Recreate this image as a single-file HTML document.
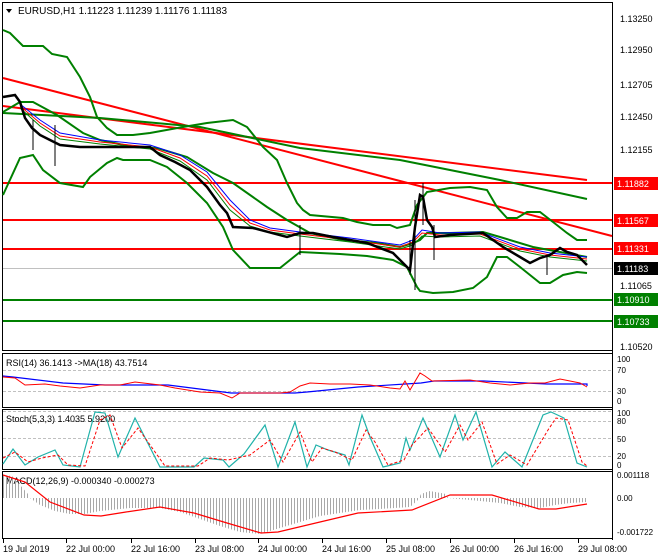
<!DOCTYPE html>
<html><head><style>
body{margin:0;background:#fff;}
svg{display:block;font-family:"Liberation Sans",sans-serif;}
</style></head><body>
<svg width="660" height="560" viewBox="0 0 660 560" xmlns="http://www.w3.org/2000/svg">
<defs>
<pattern id="hb" width="3" height="10" patternUnits="userSpaceOnUse"><rect x="0" y="0" width="1" height="10" fill="#a8a8a8"/></pattern>
</defs>
<rect width="660" height="560" fill="#fff"/>
<rect x="2.5" y="2.5" width="610" height="348" fill="none" stroke="#000"/>
<rect x="2.5" y="353.5" width="610" height="54" fill="none" stroke="#000"/>
<rect x="2.5" y="409.5" width="610" height="60" fill="none" stroke="#000"/>
<rect x="2.5" y="471.5" width="610" height="67" fill="none" stroke="#000"/>
<line x1="612.5" y1="2" x2="612.5" y2="540" stroke="#000"/>
<polygon points="6,9 12,9 9,13" fill="#000"/>
<text x="18" y="14" font-size="10">EURUSD,H1  1.11223 1.11239 1.11176 1.11183</text>
<line x1="3" y1="268.5" x2="612" y2="268.5" stroke="#c0c0c0"/>
<g stroke-width="2">
<line x1="3" y1="183" x2="612" y2="183" stroke="#f00"/>
<line x1="3" y1="220" x2="612" y2="220" stroke="#f00"/>
<line x1="3" y1="249" x2="612" y2="249" stroke="#f00"/>
<line x1="3" y1="300" x2="612" y2="300" stroke="#008000"/>
<line x1="3" y1="321" x2="612" y2="321" stroke="#008000"/>
</g>
<line x1="3" y1="78" x2="612" y2="236" stroke="#f00" stroke-width="2"/>
<line x1="3" y1="106" x2="587" y2="180" stroke="#f00" stroke-width="2"/>
<!-- long green MA -->
<polyline fill="none" stroke="#008000" stroke-width="2" points="3,113 100,118 200,127 300,148 400,160 450,170 500,180 587,199"/>
<!-- BB upper -->
<polyline fill="none" stroke="#008000" stroke-width="2" points="3,30 10,33 23,46 43,46 52,54 67,57 80,77 90,97 97,117 107,128 117,135 133,135 150,133 183,127 207,123 233,120 247,127 263,147 277,160 287,183 297,203 303,210 310,215 343,218 357,222 373,225 390,225 397,228 410,225 417,205 427,192 450,188 470,187 487,190 497,207 507,218 517,218 527,212 540,212 553,222 567,233 577,240 587,240"/>
<!-- BB lower -->
<polyline fill="none" stroke="#008000" stroke-width="2" points="3,195 20,158 33,155 43,170 60,183 83,187 90,177 107,163 117,158 123,160 150,160 167,167 187,183 207,203 223,227 233,250 250,268 280,268 290,260 300,252 340,254 367,256 393,260 407,267 417,287 420,291 433,293 453,292 473,288 487,277 497,257 507,257 520,267 540,283 550,283 563,275 577,272 587,273"/>
<!-- BB middle -->
<polyline fill="none" stroke="#008000" stroke-width="2" points="3,112 20,102 33,102 57,115 83,133 100,140 133,147 157,148 187,157 213,173 233,183 267,207 287,220 310,233 343,240 377,243 400,247 413,243 420,240 427,233 450,233 483,232 500,237 533,247 587,257"/>
<!-- small MAs -->
<polyline fill="none" stroke="#00f" stroke-width="1" points="20,104 40,120 60,133 100,140 150,145 180,155 207,172 230,200 250,220 270,228 300,232 350,238 400,245 413,240 422,230 440,233 480,232 520,247 550,253 587,257"/>
<polyline fill="none" stroke="#f00" stroke-width="1" points="20,106 40,123 60,136 100,142 150,147 180,158 207,176 230,205 250,223 270,230 300,234 350,240 400,247 413,242 422,233 440,235 480,234 520,249 550,255 587,259"/>
<polyline fill="none" stroke="#008000" stroke-width="1" points="20,108 40,126 60,139 100,144 150,149 180,161 207,180 230,210 250,226 270,232 300,236 350,242 400,249 413,245 422,236 440,237 480,236 520,251 550,257 587,261"/>
<!-- price -->
<polyline fill="none" stroke="#000" stroke-width="2.5" points="3,97 15,95 20,102 25,118 32,128 40,135 50,140 60,145 80,147 100,147 130,147 150,147 160,155 175,162 190,170 207,187 220,205 227,213 233,227 253,228 287,237 300,233 313,233 333,237 367,243 393,253 400,260 410,270 415,227 420,195 423,197 427,220 432,227 435,237 450,235 483,233 493,240 503,247 520,257 530,263 540,258 550,255 560,248 567,252 577,255 587,265"/>
<g stroke="#000" stroke-width="1">
<line x1="55" y1="125" x2="55" y2="166"/><line x1="33" y1="120" x2="33" y2="150"/><line x1="410" y1="240" x2="410" y2="275"/><line x1="415" y1="200" x2="415" y2="290"/><line x1="423" y1="183" x2="423" y2="225"/><line x1="434" y1="225" x2="434" y2="260"/><line x1="547" y1="255" x2="547" y2="275"/><line x1="300" y1="225" x2="300" y2="255"/>
</g>
<g font-size="9" fill="#000">
<text x="620" y="22">1.13250</text>
<text x="620" y="53">1.12950</text>
<text x="620" y="88">1.12705</text>
<text x="620" y="120">1.12450</text>
<text x="620" y="153">1.12155</text>
<text x="620" y="289">1.11065</text>
<text x="620" y="350">1.10520</text>
</g>
<g font-size="9" fill="#fff">
<rect x="614" y="177" width="44" height="13" fill="#f00"/><text x="617" y="187">1.11882</text>
<rect x="614" y="214" width="44" height="13" fill="#f00"/><text x="617" y="224">1.11567</text>
<rect x="614" y="242" width="44" height="13" fill="#f00"/><text x="617" y="252">1.11331</text>
<rect x="614" y="262" width="44" height="13" fill="#000"/><text x="617" y="272">1.11183</text>
<rect x="614" y="293" width="44" height="13" fill="#008000"/><text x="617" y="303">1.10910</text>
<rect x="614" y="315" width="44" height="13" fill="#008000"/><text x="617" y="325">1.10733</text>
</g>
<g stroke="#c0c0c0" stroke-dasharray="3,2"><line x1="3" y1="370.5" x2="612" y2="370.5"/><line x1="3" y1="391.5" x2="612" y2="391.5"/>
<line x1="3" y1="421.5" x2="612" y2="421.5"/><line x1="3" y1="438.5" x2="612" y2="438.5"/><line x1="3" y1="456.5" x2="612" y2="456.5"/><line x1="3" y1="411.5" x2="612" y2="411.5"/></g>
<text x="6" y="366" font-size="9">RSI(14) 36.1413  -&gt;MA(18) 43.7514</text>
<polyline fill="none" stroke="#00f" stroke-width="1.2" points="3,376 13,377 63,383 105,385 168,385 231,393 295,393 307,392 358,387 421,383 434,381 484,381 526,383 547,384 587,384 587,386"/>
<polyline fill="none" stroke="#f00" stroke-width="1" points="3,377 15,378 25,385 45,384 60,386 80,388 100,385 120,385 135,382 160,385 175,388 200,392 220,393 232,398 240,393 260,393 280,393 290,392 300,386 310,383 330,384 350,384 370,385 390,388 400,389 405,381 410,390 420,373 425,376 432,381 470,380 490,383 510,385 530,383 545,383 560,379 570,381 580,383 587,387"/>
<g font-size="8"><text x="617" y="362">100</text><text x="617" y="373">70</text><text x="617" y="394">30</text><text x="617" y="404">0</text></g>
<text x="6" y="422" font-size="9">Stoch(5,3,3) 1.4035 5.9200</text>
<polyline fill="none" stroke="#20b2aa" stroke-width="1.2" points="3,464 13,449 25,465 38,457 55,450 63,465 80,467 95,412 105,413 118,457 135,418 160,467 194,467 204,458 223,460 229,467 244,454 265,425 278,467 295,422 307,467 316,445 328,450 345,455 349,465 362,415 370,437 383,467 400,463 406,438 410,450 423,418 440,457 455,415 463,440 476,412 492,467 505,452 522,467 543,415 551,412 564,418 577,463 587,467"/>
<polyline fill="none" stroke="#f00" stroke-width="1" stroke-dasharray="3,2" points="3,458 15,452 28,462 42,458 58,455 68,465 85,466 100,420 110,415 122,448 138,428 165,466 198,466 210,458 228,460 250,455 270,440 283,462 300,432 312,462 322,448 335,452 352,460 366,430 375,442 388,465 404,460 412,445 428,428 445,452 460,425 468,440 482,422 497,464 510,455 527,465 548,430 556,418 568,420 582,462 587,466"/>
<g font-size="8"><text x="617" y="416">100</text><text x="617" y="424">80</text><text x="617" y="442">50</text><text x="617" y="459">20</text><text x="617" y="468">0</text></g>
<text x="6" y="484" font-size="9">MACD(12,26,9) -0.000340 -0.000273</text>
<polygon fill="url(#hb)" points="3,475 12,476 20,485 28,494 30,498 40,505 55,511 70,514 85,514 100,511 130,508 160,508 180,512 200,519 220,526 240,532 260,534 280,528 300,522 320,516 340,513 360,510 380,509 410,507 418,500 421,494 430,491 446,494 448,498 470,500 500,503 520,507 540,508 555,505 570,503 587,502 587,498 3,498"/>
<polyline fill="none" stroke="#f00" stroke-width="1.2" points="3,475 25,482 50,502 84,515 101,516 126,512 160,507 194,513 227,523 261,533 278,532 320,522 358,513 412,510 450,495 492,495 539,509 556,509 587,504"/>
<g font-size="8"><text x="617" y="478">0.001118</text><text x="617" y="501">0.00</text><text x="617" y="535">-0.001722</text></g>
<g stroke="#000"><line x1="3.5" y1="539" x2="3.5" y2="543"/><line x1="66.5" y1="539" x2="66.5" y2="543"/><line x1="131.5" y1="539" x2="131.5" y2="543"/><line x1="195.5" y1="539" x2="195.5" y2="543"/><line x1="258.5" y1="539" x2="258.5" y2="543"/><line x1="322.5" y1="539" x2="322.5" y2="543"/><line x1="386.5" y1="539" x2="386.5" y2="543"/><line x1="450.5" y1="539" x2="450.5" y2="543"/><line x1="514.5" y1="539" x2="514.5" y2="543"/><line x1="578.5" y1="539" x2="578.5" y2="543"/></g>
<g font-size="9">
<text x="3" y="552">19 Jul 2019</text>
<text x="66" y="552">22 Jul 00:00</text>
<text x="131" y="552">22 Jul 16:00</text>
<text x="195" y="552">23 Jul 08:00</text>
<text x="258" y="552">24 Jul 00:00</text>
<text x="322" y="552">24 Jul 16:00</text>
<text x="386" y="552">25 Jul 08:00</text>
<text x="450" y="552">26 Jul 00:00</text>
<text x="514" y="552">26 Jul 16:00</text>
<text x="578" y="552">29 Jul 08:00</text>
</g>
</svg>
</body></html>
